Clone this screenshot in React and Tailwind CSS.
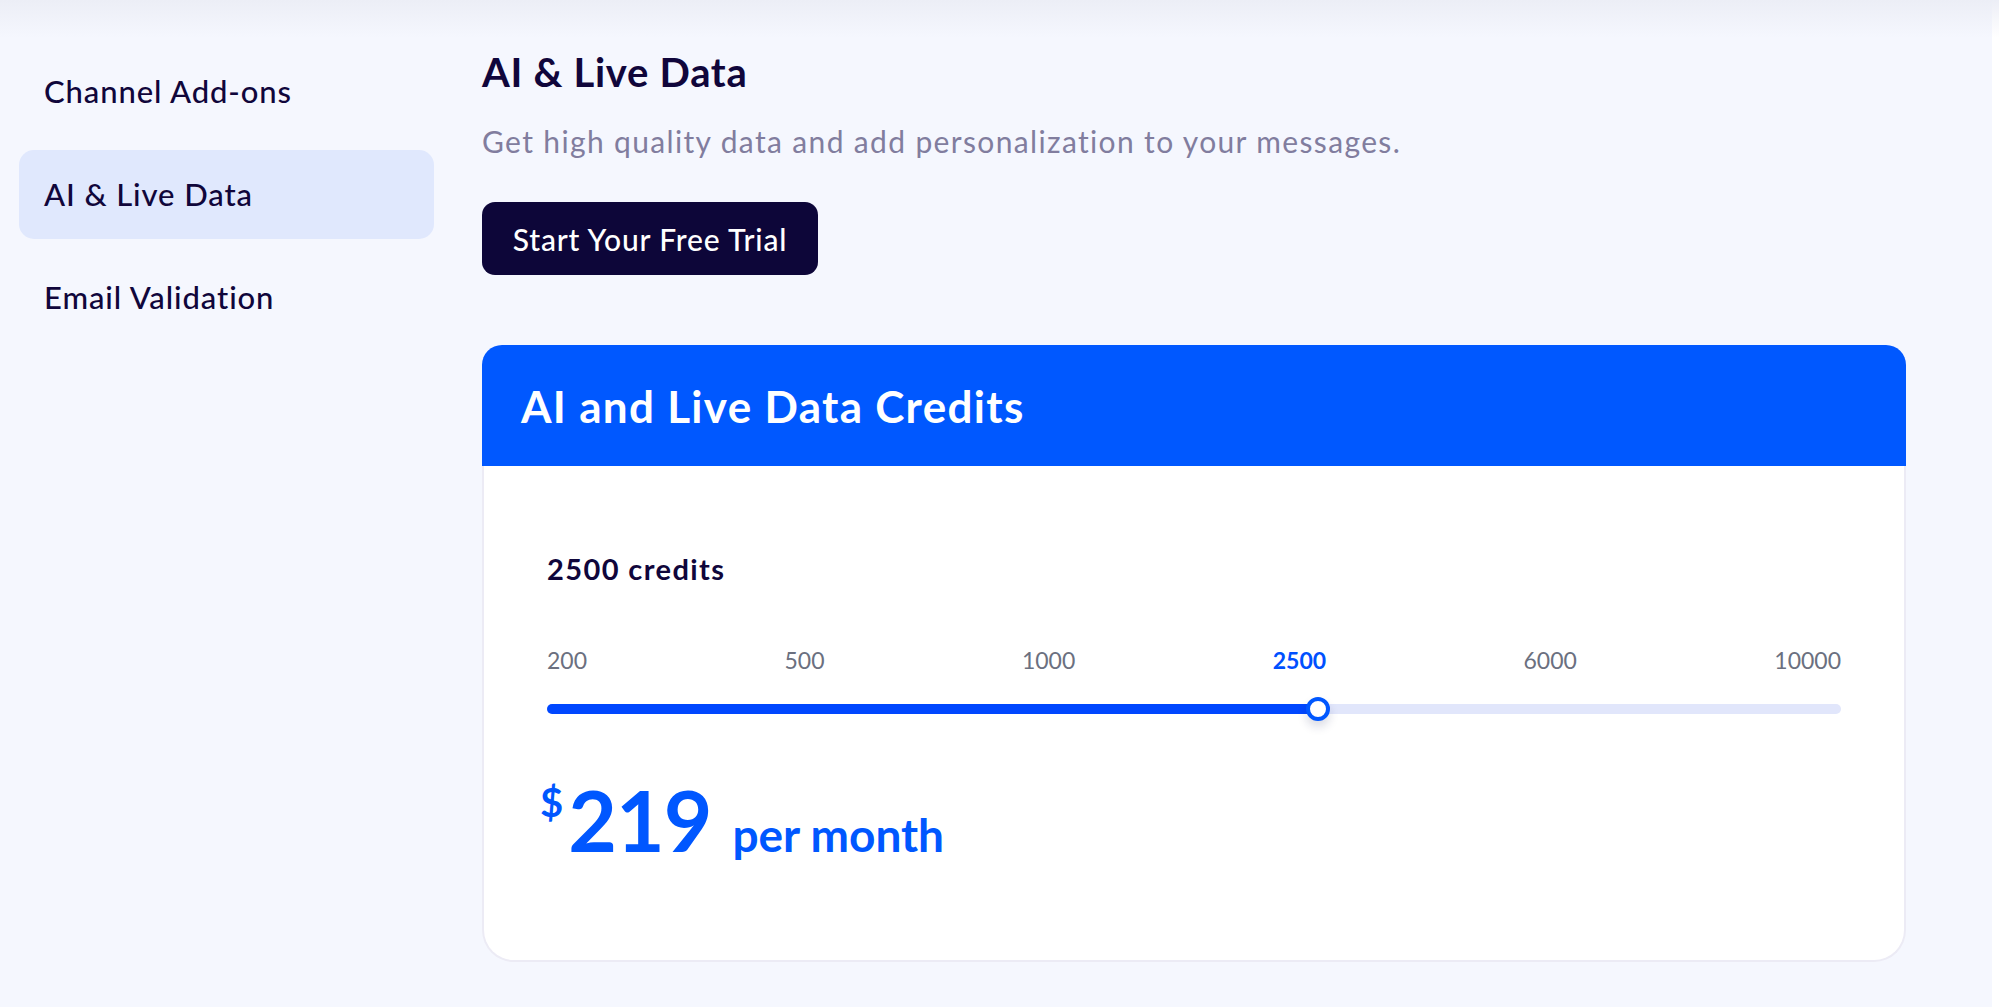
import React from "react";

const font = { fontFamily: "Lato, 'Noto Sans', sans-serif" };

function SideItem({ label, active }) {
  return (
    <div
      className={`h-[89px] rounded-[15px] px-[25px] flex items-center ${
        active ? "bg-[#e0e8fd]" : ""
      }`}
    >
      <span className="text-[31px] leading-none font-medium text-[#10063b] tracking-[0.9px]">
        {label}
      </span>
    </div>
  );
}

export default function App() {
  const ticks = ["200", "500", "1000", "2500", "6000", "10000"];
  const activeIndex = 3;
  const pct = 59.6;

  return (
    <div
      className="relative w-full h-[1007px] bg-[#f5f7fe] flex overflow-hidden"
      style={font}
    >
      <div className="absolute left-0 right-0 top-0 h-[38px] bg-gradient-to-b from-[#eceef6] to-[#f5f7fe00] pointer-events-none" />

      <aside className="w-[434px] shrink-0 pl-[19px] pt-[47px] flex flex-col gap-[14px]">
        <SideItem label="Channel Add-ons" />
        <SideItem label="AI & Live Data" active />
        <SideItem label="Email Validation" />
      </aside>

      <main className="flex-1 ml-[48px] pt-[52px] flex flex-col">
        <h1 className="text-[40px] leading-none font-bold text-[#10063b] tracking-[0.7px]">
          AI &amp; Live Data
        </h1>
        <p className="mt-[34px] text-[30px] leading-none text-[#817d9e] tracking-[1.35px]">
          Get high quality data and add personalization to your messages.
        </p>
        <div className="mt-[46px]">
          <button className="h-[73px] w-[336px] rounded-[13px] bg-[#0d0639] text-white text-[30px] font-medium leading-none tracking-[0.85px] flex items-center justify-center">
            Start Your Free Trial
          </button>
        </div>

        <section className="mt-[70px] w-[1424px] flex flex-col">
          <div className="h-[121px] bg-[#0058ff] rounded-t-[20px] pl-[39px] flex items-center">
            <h2 className="text-[44px] leading-none font-bold text-white tracking-[1.3px]">
              AI and Live Data Credits
            </h2>
          </div>
          <div className="bg-white border-x-2 border-b-2 border-[#ecebf5] rounded-b-[32px] pl-[63px] pr-[63px] pt-[88px] pb-[98px]">
            <div className="text-[29px] leading-none font-bold text-[#10063b] tracking-[1.4px]">
              2500 credits
            </div>
            <div className="mt-[66px] flex justify-between text-[23px] leading-none">
              {ticks.map((t, i) => (
                <span
                  key={t}
                  className={
                    i === activeIndex
                      ? "font-bold text-[#0050ff]"
                      : "text-[#6b7080]"
                  }
                >
                  {t}
                </span>
              ))}
            </div>
            <div className="mt-[32px] relative h-[10px] rounded-full bg-[#e1e6fb]">
              <div
                className="h-full rounded-full bg-[#0047ff]"
                style={{ width: `${pct}%` }}
              />
              <div
                className="absolute top-1/2 -translate-x-1/2 -translate-y-1/2 w-[24px] h-[24px] rounded-full bg-white border-[4px] border-[#0057ff] shadow-[0_6px_10px_rgba(20,30,80,0.15)]"
                style={{ left: `${pct}%` }}
              />
            </div>
            <div className="mt-[64px] -ml-[7px] flex items-baseline text-[#0057ff] font-bold">
              <span className="self-start mt-[4px] mr-[5px] text-[40px] leading-none">
                $
              </span>
              <span className="text-[84px] leading-none tracking-[-1px]">219</span>
              <span className="ml-[21px] text-[46px] leading-none">
                per month
              </span>
            </div>
          </div>
        </section>
      </main>

      <div className="w-[7px] shrink-0 bg-white" />
    </div>
  );
}
